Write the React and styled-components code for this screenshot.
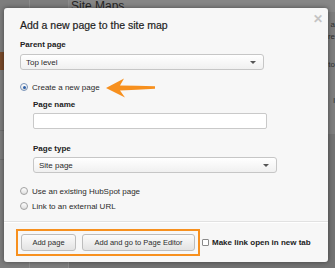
import React from "react"
import styled, { createGlobalStyle } from "styled-components"

const GlobalStyle = createGlobalStyle`
  html, body {
    margin: 0;
    padding: 0;
    background: #7d7d7d;
    font-family: "Liberation Sans", Arial, Helvetica, sans-serif;
  }
  #root {
    position: relative;
    width: 335px;
    height: 268px;
    overflow: hidden;
  }
`

const Backdrop = styled.div`
  display: flex;
  width: 335px;
  height: 268px;
  background: #7d7d7d;
`

const Rail = styled.div`
  display: flex;
  flex-direction: column;
  flex: none;
  width: ${p => p.width}px;
  box-sizing: border-box;
  border-right: 1px solid #8c8c8c;
`

const RailBand = styled.div`
  margin-top: 52px;
  height: 18px;
  background: #7a4b2b;
`

const RailLine = styled.div`
  margin-top: ${p => p.top}px;
  height: 1px;
  background: #6f6f6f;
`

const Main = styled.div`
  flex: 1;
  display: flex;
  flex-direction: column;
`

const PageHeading = styled.div`
  font-size: 12px;
  line-height: 12px;
  height: 12px;
  color: #252525;
  background: #868686;
  padding-left: 2px;
  white-space: nowrap;
`

const SideText = styled.div`
  display: flex;
  flex-direction: column;
  align-items: flex-end;
  gap: 2px;
  margin-top: 8px;
  font-size: 8px;
  color: #2f2f2f;
  line-height: 10px;
`

const DarkBlock = styled.div`
  margin-top: 28px;
  flex: 1;
  background: #727272;
`

const Modal = styled.div`
  position: absolute;
  left: 4px;
  top: 8px;
  width: 324px;
  height: 254px;
  box-sizing: border-box;
  background: #f7f7f7;
  border-radius: 3px;
  box-shadow: 0 0 5px rgba(0, 0, 0, 0.45);
  display: flex;
  flex-direction: column;
`

const Body = styled.div`
  padding: 11px 16px 0 16px;
  display: flex;
  flex-direction: column;
`

const Close = styled.div`
  position: absolute;
  right: 5px;
  top: 4px;
  font-size: 12px;
  font-weight: bold;
  color: #c4c4c4;
`

const Title = styled.div`
  font-size: 10.5px;
  line-height: 12px;
  color: #1e1e1e;
  -webkit-text-stroke: 0.2px #1e1e1e;
`

const Label = styled.div`
  font-size: 8px;
  line-height: 10px;
  font-weight: bold;
  color: #222;
  margin-top: ${p => p.top}px;
`

const Select = styled.div`
  margin-top: ${p => p.top || 4}px;
  width: ${p => p.width}px;
  height: 16px;
  box-sizing: border-box;
  border: 1px solid #c6c6c6;
  border-radius: 3px;
  background: linear-gradient(#ffffff, #f0f0f0);
  display: flex;
  align-items: center;
  justify-content: space-between;
  padding: 0 7px 0 5px;
  font-size: 8px;
  color: #2a2a2a;
`

const Caret = styled.span`
  width: 0;
  height: 0;
  border-left: 3px solid transparent;
  border-right: 3px solid transparent;
  border-top: 3.5px solid #555;
`

const Input = styled.div`
  margin-top: 3px;
  width: 234px;
  height: 16px;
  box-sizing: border-box;
  border: 1px solid #c9c9c9;
  border-radius: 2px;
  background: #fff;
`

const RadioRow = styled.div`
  display: flex;
  align-items: center;
  gap: 4px;
  height: 10px;
  margin-top: ${p => p.top}px;
  font-size: 8px;
  color: #2a2a2a;
`

const Radio = styled.span`
  width: 8px;
  height: 8px;
  box-sizing: border-box;
  border-radius: 50%;
  border: 1px solid ${p => (p.checked ? "#7a94b8" : "#a2a2a2")};
  background: linear-gradient(#ffffff, #dedede);
  display: flex;
  align-items: center;
  justify-content: center;
  &::after {
    content: "";
    display: ${p => (p.checked ? "block" : "none")};
    width: 3px;
    height: 3px;
    border-radius: 50%;
    background: #2c5fa8;
  }
`

const Arrow = styled.svg`
  margin-left: 2px;
  margin-top: 1px;
  flex: none;
`

const SubSection = styled.div`
  display: flex;
  flex-direction: column;
  padding-left: 13px;
`

const Divider = styled.div`
  margin-top: 10px;
  height: 1px;
  background: #e2e2e2;
  border-bottom: 1px solid #ffffff;
`

const Footer = styled.div`
  display: flex;
  align-items: center;
  gap: 2px;
  padding: 6px 12px 0 12px;
`

const Highlight = styled.div`
  display: flex;
  gap: 6px;
  padding: 3px;
  border: 2px solid #f7901e;
`

const Button = styled.div`
  width: ${p => p.width}px;
  height: 17px;
  box-sizing: border-box;
  border: 1px solid #bdbdbd;
  border-radius: 3px;
  background: linear-gradient(#fbfbfb, #e3e3e3);
  display: flex;
  align-items: center;
  justify-content: center;
  font-size: 7.5px;
  color: #2b2b2b;
`

const Check = styled.label`
  display: flex;
  align-items: center;
  gap: 3px;
  font-size: 8px;
  font-weight: bold;
  color: #222;
`

const Box = styled.span`
  width: 7px;
  height: 7px;
  box-sizing: border-box;
  border: 1px solid #8a8a8a;
  border-radius: 1px;
  background: #fff;
`

export default function App() {
  return (
    <>
      <GlobalStyle />
      <Backdrop>
        <Rail width={30}>
          <RailBand />
          <RailLine top={60} />
          <RailLine top={28} />
        </Rail>
        <Rail width={39} />
        <Main>
          <PageHeading>Site Maps</PageHeading>
          <SideText>
            <span>a</span>
            <span>re</span>
            <span style={{ marginTop: 16 }}>to</span>
            <span style={{ marginTop: 24 }}>l</span>
          </SideText>
          <DarkBlock />
        </Main>
      </Backdrop>
      <Modal>
        <Close>✕</Close>
        <Body>
          <Title>Add a new page to the site map</Title>
          <Label top={9}>Parent page</Label>
          <Select width={244}>
            <span>Top level</span>
            <Caret />
          </Select>
          <RadioRow top={12}>
            <Radio checked />
            <span>Create a new page</span>
            <Arrow width="50" height="20" viewBox="0 0 50 20">
              <path
                d="M0 10 L18 0.5 L14 7.5 Q30 7.8 49 8.3 L49 10.8 Q30 11.8 14 12.5 L19 19.5 Z"
                fill="#f7901e"
              />
            </Arrow>
          </RadioRow>
          <SubSection>
            <Label top={8}>Page name</Label>
            <Input />
            <Label top={15}>Page type</Label>
            <Select width={244} top={3}>
              <span>Site page</span>
              <Caret />
            </Select>
          </SubSection>
          <RadioRow top={13}>
            <Radio />
            <span>Use an existing HubSpot page</span>
          </RadioRow>
          <RadioRow top={5}>
            <Radio />
            <span>Link to an external URL</span>
          </RadioRow>
        </Body>
        <Divider />
        <Footer>
          <Highlight>
            <Button width={55}>Add page</Button>
            <Button width={113}>Add and go to Page Editor</Button>
          </Highlight>
          <Check>
            <Box />
            Make link open in new tab
          </Check>
        </Footer>
      </Modal>
    </>
  )
}
